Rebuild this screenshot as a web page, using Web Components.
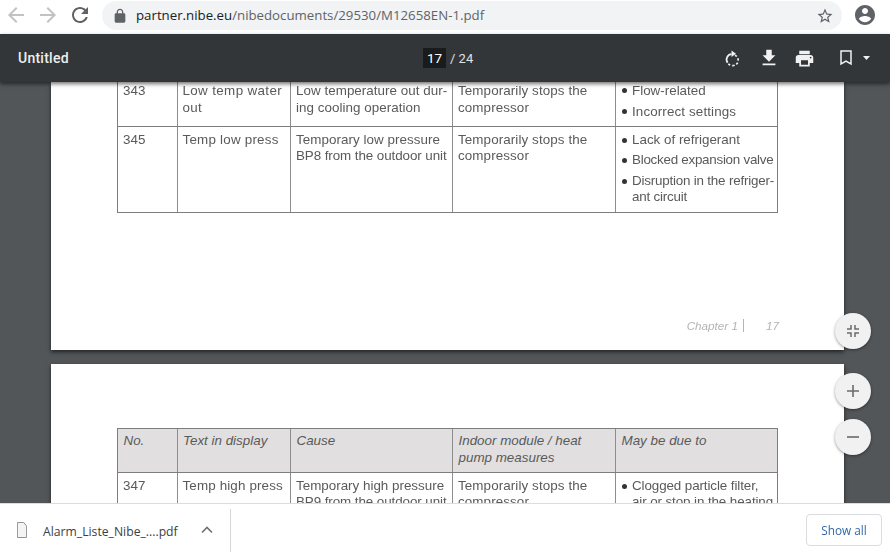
<!DOCTYPE html>
<html><head><meta charset="utf-8"><title>Untitled</title>
<style>
html,body{margin:0;height:100%;overflow:hidden;background:#fff}
body{font-family:"Open Sans","Liberation Sans",sans-serif}
</style></head><body>
<browser-shell>
  <browser-toolbar slot="top" url-host="partner.nibe.eu" url-path="/nibedocuments/29530/M12658EN-1.pdf"></browser-toolbar>
  <pdf-toolbar slot="top" doc-title="Untitled" page="17" total="24"></pdf-toolbar>
  <pdf-viewer>
    <pdf-page style="--h:268px;--pt:0px;--tm:-4px">
      <spec-table>
        <spec-row style="--rh:47.5px;--lh:17px;--ct:3px">
          <spec-cell>343</spec-cell><spec-cell style="letter-spacing:.36px">Low temp water<br>out</spec-cell><spec-cell style="letter-spacing:.04px">Low temperature out dur-<br>ing cooling operation</spec-cell><spec-cell style="letter-spacing:.1px">Temporarily stops the<br>compressor</spec-cell>
          <spec-cell kind="list"><spec-bullet>Flow-related</spec-bullet><spec-bullet style="--gap:3.500px;letter-spacing:.12px">Incorrect settings</spec-bullet></spec-cell>
        </spec-row>
        <spec-row style="--rh:86.5px;--lh:16px;--ct:5px">
          <spec-cell>345</spec-cell><spec-cell style="letter-spacing:.22px">Temp low press</spec-cell><spec-cell style="letter-spacing:.05px">Temporary low pressure<br><span style="letter-spacing:-.08px">BP8 from the outdoor unit</span></spec-cell><spec-cell style="letter-spacing:.1px">Temporarily stops the<br>compressor</spec-cell>
          <spec-cell kind="list"><spec-bullet>Lack of refrigerant</spec-bullet><spec-bullet style="--gap:4px;letter-spacing:-.26px">Blocked expansion valve</spec-bullet><spec-bullet style="--gap:5px;letter-spacing:-.2px">Disruption in the refriger-<br>ant circuit</spec-bullet></spec-cell>
        </spec-row>
      </spec-table>
      <page-footer chapter="Chapter 1" page="17"></page-footer>
    </pdf-page>
    <pdf-page style="--h:400px;--pt:64px;--tm:0px">
      <spec-table>
        <spec-row head style="--rh:44px;--lh:17px;--ct:3px;--fs:italic;--cl:5.5px">
          <spec-cell>No.</spec-cell><spec-cell>Text in display</spec-cell><spec-cell>Cause</spec-cell><spec-cell>Indoor module / heat<br>pump measures</spec-cell><spec-cell>May be due to</spec-cell>
        </spec-row>
        <spec-row style="--rh:85px;--lh:16px;--ct:5px">
          <spec-cell>347</spec-cell><spec-cell style="letter-spacing:.14px">Temp high press</spec-cell><spec-cell>Temporary high pressure<br><span style="letter-spacing:-.08px">BP9 from the outdoor unit</span></spec-cell><spec-cell style="letter-spacing:.1px">Temporarily stops the<br>compressor</spec-cell>
          <spec-cell kind="list"><spec-bullet style="letter-spacing:-.1px">Clogged particle filter,<br>air or stop in the heating</spec-bullet></spec-cell>
        </spec-row>
      </spec-table>
    </pdf-page>
  </pdf-viewer>
  <download-bar slot="bottom" file="Alarm_Liste_Nibe_....pdf"></download-bar>
</browser-shell>
<script>
function def(name,css,html){
  customElements.define(name,class extends HTMLElement{
    constructor(){super();const r=this.attachShadow({mode:"open"});
      r.innerHTML="<style>"+css+"</style>"+(typeof html==="function"?html(this):html);}
  });
}
const ic=(d,s,c,style)=>`<svg width="${s}" height="${s}" viewBox="0 0 24 24" fill="${c}" style="display:block;flex:none;${style||""}"><path d="${d}"/></svg>`;
const P={
 back:"M20 11H7.83l5.59-5.59L12 4l-8 8 8 8 1.41-1.41L7.83 13H20v-2z",
 fwd:"M12 4l-1.41 1.41L16.17 11H4v2h12.17l-5.58 5.59L12 20l8-8z",
 reload:"M17.65 6.35C16.2 4.9 14.21 4 12 4c-4.42 0-7.99 3.58-7.99 8s3.57 8 7.99 8c3.73 0 6.84-2.55 7.73-6h-2.08c-.82 2.33-3.04 4-5.65 4-3.31 0-6-2.69-6-6s2.69-6 6-6c1.66 0 3.14.69 4.22 1.78L13 11h7V4l-2.35 2.35z",
 lock:"M18 8h-1V6c0-2.76-2.24-5-5-5S7 3.24 7 6v2H6c-1.1 0-2 .9-2 2v10c0 1.1.9 2 2 2h12c1.1 0 2-.9 2-2V10c0-1.1-.9-2-2-2zM9 6c0-1.66 1.34-3 3-3s3 1.34 3 3v2H9V6z",
 star:"M22 9.24l-7.19-.62L12 2 9.19 8.63 2 9.24l5.46 4.73L5.82 21 12 17.27 18.18 21l-1.63-7.03L22 9.24zM12 15.4l-3.76 2.27 1-4.28-3.32-2.88 4.38-.38L12 6.1l1.71 4.04 4.38.38-3.32 2.88 1 4.28L12 15.4z",
 acct:"M12 2C6.48 2 2 6.48 2 12s4.48 10 10 10 10-4.48 10-10S17.52 2 12 2zm0 3c1.66 0 3 1.34 3 3s-1.34 3-3 3-3-1.34-3-3 1.34-3 3-3zm0 14.2c-2.5 0-4.71-1.28-6-3.22.03-1.99 4-3.08 6-3.08 1.99 0 5.97 1.09 6 3.08-1.29 1.94-3.5 3.22-6 3.22z",
 dl:"M19 9h-4V3H9v6H5l7 7 7-7zM5 18v2h14v-2H5z",
 print:"M19 8H5c-1.66 0-3 1.34-3 3v6h4v4h12v-4h4v-6c0-1.66-1.34-3-3-3zm-3 11H8v-5h8v5zm3-7c-.55 0-1-.45-1-1s.45-1 1-1 1 .45 1 1-.45 1-1 1zm-1-9H6v4h12V3z"
};
def("browser-shell",`:host{display:flex;flex-direction:column;width:890px;height:556px;overflow:hidden}`,
 `<slot name="top"></slot><slot></slot><slot name="bottom"></slot>`);
def("browser-toolbar",`:host{display:flex;align-items:center;height:34px;box-sizing:border-box;background:#fff;padding:0 13px 4px 4px;flex:none}
 .nav{display:flex;align-items:center;gap:8px;margin-right:10px}
 .pill{flex:1;height:29px;border-radius:15px;background:#f1f3f4;display:flex;align-items:center;padding:0 8px 0 10px;margin-top:1px}
 .t{font:13.25px "Open Sans","Liberation Sans",sans-serif;color:#5f6368;margin-left:8px;flex:1;white-space:nowrap;position:relative;top:-1px}
 .t b{font-weight:400;color:#202124}
 .acct{margin-left:11px}`,
 h=>`<div class="nav">${ic(P.back,24,"#c0c2c4")}${ic(P.fwd,24,"#c0c2c4")}${ic(P.reload,24,"#5f6368")}</div>
 <div class="pill">${ic(P.lock,16,"#5f6368")}<span class="t"><b>${h.getAttribute("url-host")}</b>${h.getAttribute("url-path")}</span>${ic(P.star,18,"#5f6368")}</div>
 <div class="acct">${ic(P.acct,24,"#5f6368")}</div>`);
def("pdf-toolbar",`:host{display:flex;align-items:center;height:48px;background:#323639;color:#f1f1f1;flex:none;position:relative;z-index:2;box-shadow:0 2px 4px rgba(0,0,0,.55);padding:0 20px 0 18px;font-family:Roboto,sans-serif}
 .title{font-size:14px;font-weight:500;letter-spacing:.25px;width:405px;color:#eee}
 .pg{display:flex;align-items:center;font-size:13px;color:#e0e0e0}
 .n{width:23px;height:20px;background:#191b1c;color:#fff;display:flex;align-items:center;justify-content:center;font-size:13.5px;font-weight:400;margin-right:4px}
 .tools{margin-left:auto;display:flex;align-items:center}
 .tools svg{display:block;flex:none}`,
 h=>`<div class="title">${h.getAttribute("doc-title")}</div>
 <div class="pg"><span class="n">${h.getAttribute("page")}</span><span>/ ${h.getAttribute("total")}</span></div>
 <div class="tools">
  <svg width="16" height="18" viewBox="0 0 16 18" fill="none" style="margin-right:17.500px"><path d="M7.500 5.100A5.500 5.500 0 0 0 3.600 13.800" stroke="#f1f1f1" stroke-width="1.700"/><path d="M11 6.200A5.500 5.500 0 1 1 4.200 14.400" stroke="#f1f1f1" stroke-width="1.700" stroke-dasharray="2.300 1.900"/><path d="M7.500 1.500v6.500l4.500-3.250z" fill="#f1f1f1"/></svg>
  ${ic(P.dl,22,"#f1f1f1","margin-right:14.5px")}
  ${ic(P.print,21,"#f1f1f1","margin-right:24px")}
  <svg width="14" height="16" viewBox="0 0 14 16" fill="none" style="margin-right:10px"><path d="M2 1h10v13l-5-3-5 3z" stroke="#f1f1f1" stroke-width="1.500"/></svg>
  <svg width="7" height="4" viewBox="0 0 7 4"><path d="M0 0h7L3.500 4z" fill="#f1f1f1"/></svg>
 </div>`);
def("pdf-viewer",`:host{display:block;flex:1;min-height:0;position:relative;background:#525659;overflow:hidden}
 .pages{display:flex;flex-direction:column;gap:14px;padding-left:51px}
 .fabs{position:absolute;left:835px;top:231px;display:flex;flex-direction:column}
 .fab{width:36px;height:36px;border-radius:50%;background:#f1f1f1;box-shadow:0 1px 3px rgba(0,0,0,.4);display:flex;align-items:center;justify-content:center}
 .fab svg{display:block}`,
 `<div class="pages"><slot></slot></div>
 <div class="fabs">
  <div class="fab" style="margin-bottom:24px"><svg width="16" height="16" viewBox="0 0 16 16" fill="none" stroke="#6b6b6b" stroke-width="1.500"><path d="M6 2v4H2M10 2v4h4M6 14v-4H2M10 14v-4h4"/></svg></div>
  <div class="fab" style="margin-bottom:10px"><svg width="16" height="16" viewBox="0 0 16 16" fill="none" stroke="#6b6b6b" stroke-width="1.600"><path d="M8 2v12M2 8h12"/></svg></div>
  <div class="fab"><svg width="16" height="16" viewBox="0 0 16 16" fill="none" stroke="#6b6b6b" stroke-width="1.600"><path d="M2 8h12"/></svg></div>
 </div>`);
def("pdf-page",`:host{display:block;position:relative;width:793px;height:var(--h);box-sizing:border-box;background:#fff;box-shadow:0 2px 4px rgba(0,0,0,.6);overflow:hidden;flex:none;padding:var(--pt) 0 0 66px;filter:blur(.25px)}
 .in{margin-top:var(--tm)}`,`<div class="in"><slot></slot></div>`);
def("spec-table",`:host{display:block;width:661px;box-sizing:border-box;border:solid #7d7d7d;border-width:1px 1px 0 1px}`,`<slot></slot>`);
def("spec-row",`:host{display:grid;grid-template-columns:60px 113px 162px 163px 1fr;height:var(--rh);box-sizing:border-box;border-bottom:1px solid #7d7d7d;line-height:var(--lh)}
 :host([head]){background:#e1dfdf}`,`<slot></slot>`);
def("spec-cell",`:host{display:block;box-sizing:border-box;padding:var(--ct) 0 0 var(--cl,5px);border-right:1px solid #8d8d8d;font:var(--fs,normal) 300 13.4px/var(--lh) "Liberation Sans",sans-serif;color:#5a5a5a;white-space:nowrap;overflow:hidden}
 :host(:nth-child(2)){padding-left:calc(var(--cl,5px) - .5px)}
 :host(:last-child){border-right:0}
 :host([kind=list]){padding-left:7px}`,`<slot></slot>`);
def("spec-bullet",`:host{display:block;position:relative;padding-left:9px;margin-top:var(--gap,0)}
 .d{position:absolute;left:-1px;top:6px;width:5px;height:5px;border-radius:50%;background:#333}`,`<span class="d"></span><slot></slot>`);
def("page-footer",`:host{position:absolute;right:65px;bottom:18px;display:flex;font:italic 11.7px "Liberation Sans",sans-serif;color:#b4b4b4}
 .a{padding-right:5px;border-right:1px solid #b4b4b4;margin-right:22px}`,
 h=>`<span class="a">${h.getAttribute("chapter")}</span><span>${h.getAttribute("page")}</span>`);
def("download-bar",`:host{display:flex;align-items:center;height:53px;box-sizing:border-box;background:#fff;border-top:1px solid #dcdcdc;flex:none;position:relative;z-index:3;font-family:"Open Sans","Liberation Sans",sans-serif}
 .item{display:flex;align-items:center;width:230px;height:43px;border-right:1px solid #d6d6d6;box-sizing:content-box}
 .f{margin-left:17px;margin-right:16px;display:block}
 .n{font-size:12.2px;color:#3c4043;white-space:nowrap;width:158px;position:relative;top:1px}
 .btn{margin-left:auto;margin-right:8px;width:76px;height:32px;box-sizing:border-box;border:1px solid #dadce0;border-radius:4px;display:flex;align-items:center;justify-content:center;font-size:11.8px;color:#3367a6}`,
 h=>`<div class="item"><svg class="f" width="10" height="16" viewBox="0 0 12 16" fill="#f4f4f4" stroke="#8a8a8a" preserveAspectRatio="none"><path d="M.5.5h7.500l3.500 3.500v11.500h-11z"/></svg>
 <span class="n">${h.getAttribute("file")}</span>
 <svg width="12" height="8" viewBox="0 0 12 8" fill="none" stroke="#707070" stroke-width="1.600"><path d="M1 6.500l5-5 5 5"/></svg></div>
 <div class="btn">Show all</div>`);
</script>
</body></html>
